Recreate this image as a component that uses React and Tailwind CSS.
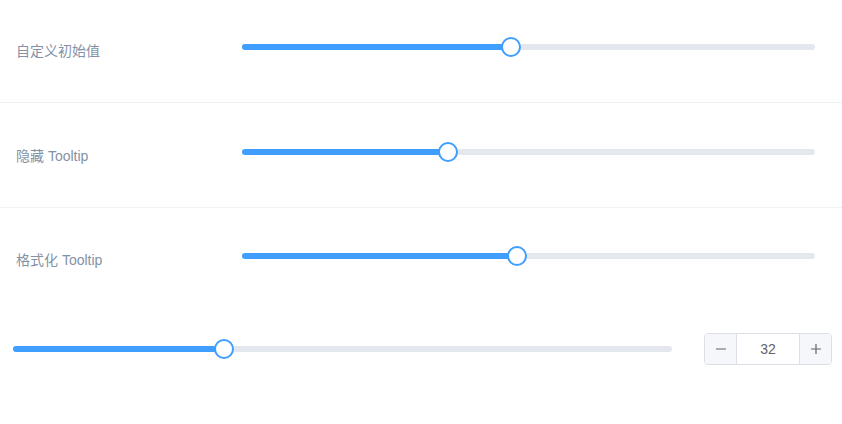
import React from 'react';

const font = { fontFamily: '"Liberation Sans", "Noto Sans CJK SC", sans-serif' };

function Slider({ value }) {
  return (
    <div className="relative h-[38px] flex-1 flex items-center">
      <div className="relative h-[6px] w-full rounded-[3px] bg-[#e4e7ed]">
        <div className="absolute left-0 top-0 h-[6px] rounded-[3px] bg-[#409eff]" style={{ width: value + '%' }} />
        <div
          className="absolute top-1/2 h-[20px] w-[20px] -translate-x-1/2 -translate-y-1/2 rounded-full border-2 border-[#409eff] bg-white"
          style={{ left: value + '%' }}
        />
      </div>
    </div>
  );
}

function Row({ label, value, className }) {
  return (
    <div className={'flex items-start pl-4 pr-[27px] ' + className}>
      <span className="w-[226px] mt-[1px] text-[14px] text-[#8492a6] leading-[44px]">{label}</span>
      <Slider value={value} />
    </div>
  );
}

export default function App() {
  return (
    <div className="w-[842px] h-[424px] bg-white overflow-hidden" style={font}>
      <Row label="自定义初始值" value={47} className="pt-[28px] h-[103px] border-b border-[#eff2f6]" />
      <Row label="隐藏 Tooltip" value={36} className="pt-[30px] h-[105px] border-b border-[#eff2f6]" />
      <Row label="格式化 Tooltip" value={48} className="pt-[29px] h-[96px]" />
      <div className="flex items-center h-[90px] pl-[13px] pr-[10px]">
        <div className="w-[659px] flex">
          <Slider value={32} />
        </div>
        <div className="ml-[32px] flex h-[32px] w-[128px] overflow-hidden rounded-[4px] border border-[#dcdfe6] text-[14px]">
          <button className="flex w-[32px] items-center justify-center border-r border-[#dcdfe6] bg-[#f5f7fa] text-[#606266]">
            <svg width="12" height="12" viewBox="0 0 12 12"><path d="M1 6h10" stroke="#606266" strokeWidth="1.2" /></svg>
          </button>
          <div className="flex flex-1 items-center justify-center text-[#606266]">32</div>
          <button className="flex w-[32px] items-center justify-center border-l border-[#dcdfe6] bg-[#f5f7fa] text-[#606266]">
            <svg width="12" height="12" viewBox="0 0 12 12"><path d="M1 6h10M6 1v10" stroke="#606266" strokeWidth="1.2" /></svg>
          </button>
        </div>
      </div>
    </div>
  );
}
